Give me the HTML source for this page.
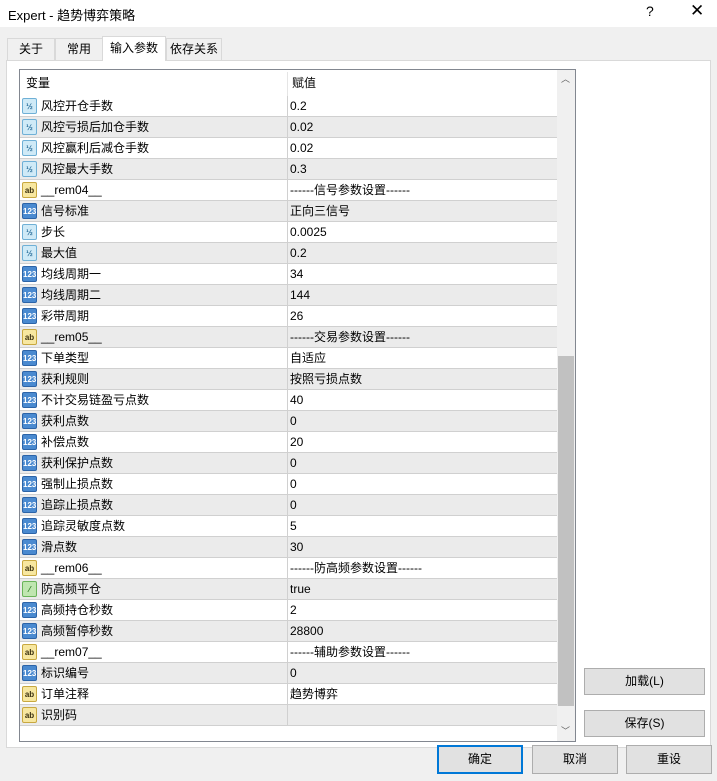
<!DOCTYPE html><html><head><meta charset="utf-8"><style>
*{margin:0;padding:0;box-sizing:border-box}
body{width:717px;height:781px;background:#f0f0f0;font-family:"Liberation Sans","Noto Sans CJK SC",sans-serif;font-size:12px;color:#000;position:relative;overflow:hidden}
.abs{position:absolute}
.title{left:0;top:0;width:717px;height:27px;background:#fff}
.tab{position:absolute;top:38px;height:22px;border:1px solid #d9d9d9;border-bottom:none;background:#f0f0f0;line-height:20px;text-align:center;font-size:12px}
.page{left:6px;top:60px;width:705px;height:688px;background:#fff;border:1px solid #d9d9d9}
.list{left:19px;top:69px;width:557px;height:673px;border:1px solid #828790;background:#fff;overflow:hidden}
.row{position:absolute;left:0;width:537px;height:21px;border-bottom:1px solid #d0d0d0;line-height:20px}
.row.g{background:#ebebeb}
.row .n{position:absolute;left:21px}
.row .v{position:absolute;left:270px}
.row .d{position:absolute;left:267px;top:0;width:1px;height:21px;background:#d0d0d0}
.ic{position:absolute;left:2px;top:2px;width:15px;height:16px;border-radius:2px;font-size:8px;line-height:15px;text-align:center;font-weight:bold}
.h{background:#cfeaf7;color:#2a6e9a;border:1px solid #6fb0d6}
.i{background:#4a8ad0;color:#fff;border:1px solid #2c64a8}
.s{background:#f7e7a0;color:#3a3010;border:1px solid #c8a840}
.b{background:#bfe6b0;color:#2a7a20;border:1px solid #6ab45a}
.btn{position:absolute;background:#e1e1e1;border:1px solid #adadad;text-align:center;font-size:12px}
</style></head><body>
<div class="abs title"><span style="position:absolute;left:8px;top:5px;font-size:13px">Expert - 趋势博弈策略</span>
<span style="position:absolute;left:646px;top:3px;font-size:14px">?</span>
<span style="position:absolute;left:690px;top:1px;font-size:17px">✕</span></div>
<div class="abs page"></div>
<div class="tab" style="left:7px;width:48px">关于</div>
<div class="tab" style="left:55px;width:48px">常用</div>
<div class="tab" style="left:102px;top:36px;height:25px;width:64px;background:#fff;line-height:22px">输入参数</div>
<div class="tab" style="left:166px;width:56px">依存关系</div>
<div class="abs list">
<div style="position:absolute;left:0;top:0;width:537px;height:26px;line-height:26px;background:#fff"><span style="position:absolute;left:6px">变量</span><span style="position:absolute;left:272px">赋值</span><div style="position:absolute;left:267px;top:2px;width:1px;height:24px;background:#e5e5e5"></div></div>
<div id="rows"></div>
<div style="position:absolute;left:537px;top:0;width:18px;height:671px;background:#f0f0f0">
<div style="position:absolute;left:1px;top:286px;width:16px;height:350px;background:#c1c1c1"></div>
<span style="position:absolute;left:4px;top:2px;font-size:9px;color:#606060">︿</span>
<span style="position:absolute;left:4px;top:654px;font-size:9px;color:#606060">﹀</span></div>
</div>
<div class="btn" style="left:584px;top:668px;width:121px;height:27px;line-height:25px">加载(L)</div>
<div class="btn" style="left:584px;top:710px;width:121px;height:27px;line-height:25px">保存(S)</div>
<div class="btn" style="left:437px;top:745px;width:86px;height:29px;line-height:25px;border:2px solid #0078d7">确定</div>
<div class="btn" style="left:532px;top:745px;width:86px;height:29px;line-height:27px">取消</div>
<div class="btn" style="left:626px;top:745px;width:86px;height:29px;line-height:27px">重设</div>
<script>
var d=[["h","风控开仓手数","0.2"],["h","风控亏损后加仓手数","0.02"],["h","风控赢利后减仓手数","0.02"],["h","风控最大手数","0.3"],["s","__rem04__","------信号参数设置------"],["i","信号标准","正向三信号"],["h","步长","0.0025"],["h","最大值","0.2"],["i","均线周期一","34"],["i","均线周期二","144"],["i","彩带周期","26"],["s","__rem05__","------交易参数设置------"],["i","下单类型","自适应"],["i","获利规则","按照亏损点数"],["i","不计交易链盈亏点数","40"],["i","获利点数","0"],["i","补偿点数","20"],["i","获利保护点数","0"],["i","强制止损点数","0"],["i","追踪止损点数","0"],["i","追踪灵敏度点数","5"],["i","滑点数","30"],["s","__rem06__","------防高频参数设置------"],["b","防高频平仓","true"],["i","高频持仓秒数","2"],["i","高频暂停秒数","28800"],["s","__rem07__","------辅助参数设置------"],["i","标识编号","0"],["s","订单注释","趋势博弈"],["s","识别码",""]];
var t={h:"½",i:"123",s:"ab",b:"⁄"};var h="";
d.forEach(function(r,k){h+='<div class="row'+(k%2?' g':'')+'" style="top:'+(26+k*21)+'px"><div class="ic '+r[0]+'">'+t[r[0]]+'</div><span class="n">'+r[1]+'</span><div class="d"></div><span class="v">'+r[2]+'</span></div>';});
document.getElementById("rows").innerHTML=h;
</script>
</body></html>
